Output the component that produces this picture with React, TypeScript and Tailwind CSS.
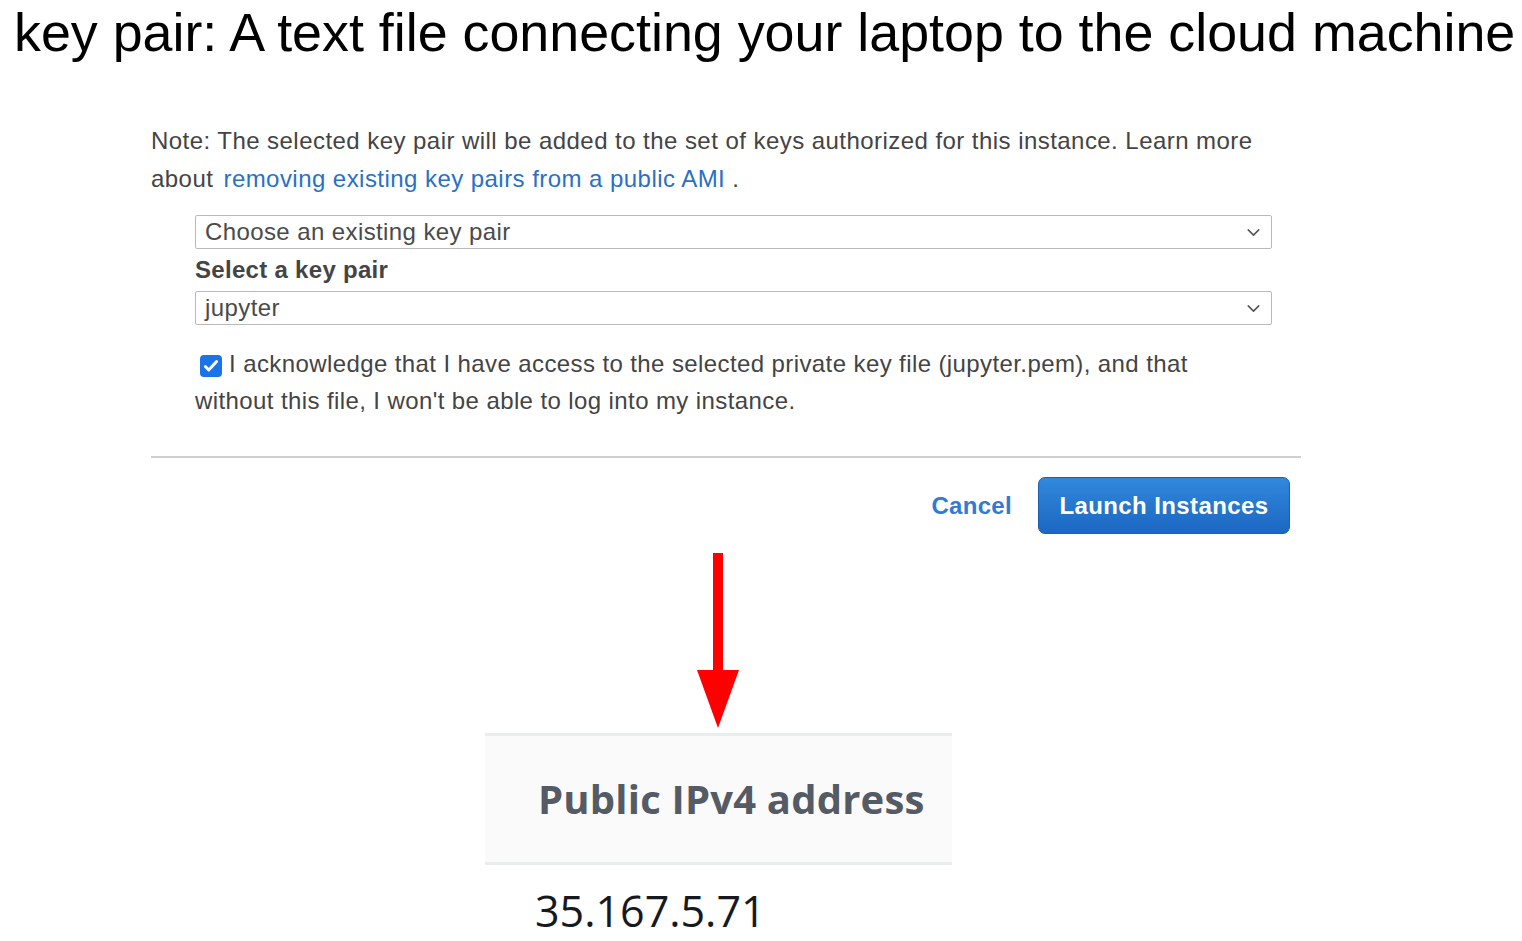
import { ChevronDown } from 'lucide-react';

const arial = "font-['Liberation_Sans',Arial,sans-serif]";

function SelectBox({ value }: { value: string }) {
  return (
    <div className="flex h-[34px] items-center justify-between border-[1.5px] border-[#b9b9b9] rounded-[2px] pl-[9px] pr-[7px]">
      <span className="text-[24px] tracking-[0.4px] text-[#4a4a4a]">{value}</span>
      <ChevronDown size={21} strokeWidth={1.8} className="text-[#555]" />
    </div>
  );
}

export default function App() {
  return (
    <div className={`min-h-screen bg-white ${arial}`}>
      {/* Slide title */}
      <h1 className="pl-[14px] pt-[2px] text-[53.8px] leading-[60px] text-black whitespace-nowrap">
        key pair: A text file connecting your laptop to the cloud machine
      </h1>

      {/* Launch dialog excerpt */}
      <div className="ml-[151px] w-[1150px] pt-[60px]">
        <p className="text-[24px] tracking-[0.45px] leading-[38px] text-[#444]">
          Note: The selected key pair will be added to the set of keys authorized for this instance. Learn more about{' '}
          <span className="ml-[3px] text-[#2a70c5]">removing existing key pairs from a public AMI</span> .
        </p>

        <div className="ml-[44px] w-[1077px] mt-[17px]">
          <SelectBox value="Choose an existing key pair" />
          <div className="text-[24px] tracking-[0.3px] leading-[42px] font-bold text-[#444]">Select a key pair</div>
          <SelectBox value="jupyter" />
        </div>

        <p className="ml-[44px] mt-[20px] w-[1040px] text-[24px] tracking-[0.4px] leading-[37px] text-[#444]">
          <span className="inline-flex align-[-3px] ml-[5px] mr-[7px] h-[22px] w-[22px] items-center justify-center rounded-[4px] bg-[#1a73e8]">
            <svg width="18" height="18" viewBox="0 0 16 16" fill="none">
              <path d="M3 8.5l3 3 7-7.5" stroke="white" strokeWidth="2.6" strokeLinecap="round" strokeLinejoin="round" />
            </svg>
          </span>
          I acknowledge that I have access to the selected private key file (jupyter.pem), and that without this file, I won't be able to log into my instance.
        </p>

        <div className="mt-[37px] h-[2px] bg-[#cfcfcf]" />

        <div className="flex items-center justify-end pr-[11px] mt-[19px]">
          <span className="text-[24px] tracking-[0.3px] font-bold text-[#2f7bd6] mr-[26px]">Cancel</span>
          <button className="h-[57px] w-[252px] rounded-[7px] border border-[#1b5fb0] bg-gradient-to-b from-[#3188dc] to-[#1c67c2] text-[24px] tracking-[0.4px] font-bold text-white">
            Launch Instances
          </button>
        </div>
      </div>

      {/* Arrow */}
      <div className="ml-[697px] mt-[19px] w-[42px]">
        <svg width="42" height="175" viewBox="0 0 42 175">
          <rect x="16" y="0" width="10" height="120" fill="#ff0000" />
          <polygon points="0,117 42,117 21,175" fill="#ff0000" />
        </svg>
      </div>

      {/* EC2 detail excerpt */}
      <div className="ml-[485px] mt-[5px] w-[467px] font-['Open_Sans',sans-serif]">
        <div className="h-[132px] border-y-[3px] border-[#eaeded] bg-[#fafafa] flex items-center pl-[53px]">
          <span className="text-[40px] font-bold text-[#545b64] tracking-[0.2px]">Public IPv4 address</span>
        </div>
        <div className="pl-[50px] pt-[17px] text-[43px] leading-[58px] text-[#16191f]">35.167.5.71</div>
      </div>
    </div>
  );
}
